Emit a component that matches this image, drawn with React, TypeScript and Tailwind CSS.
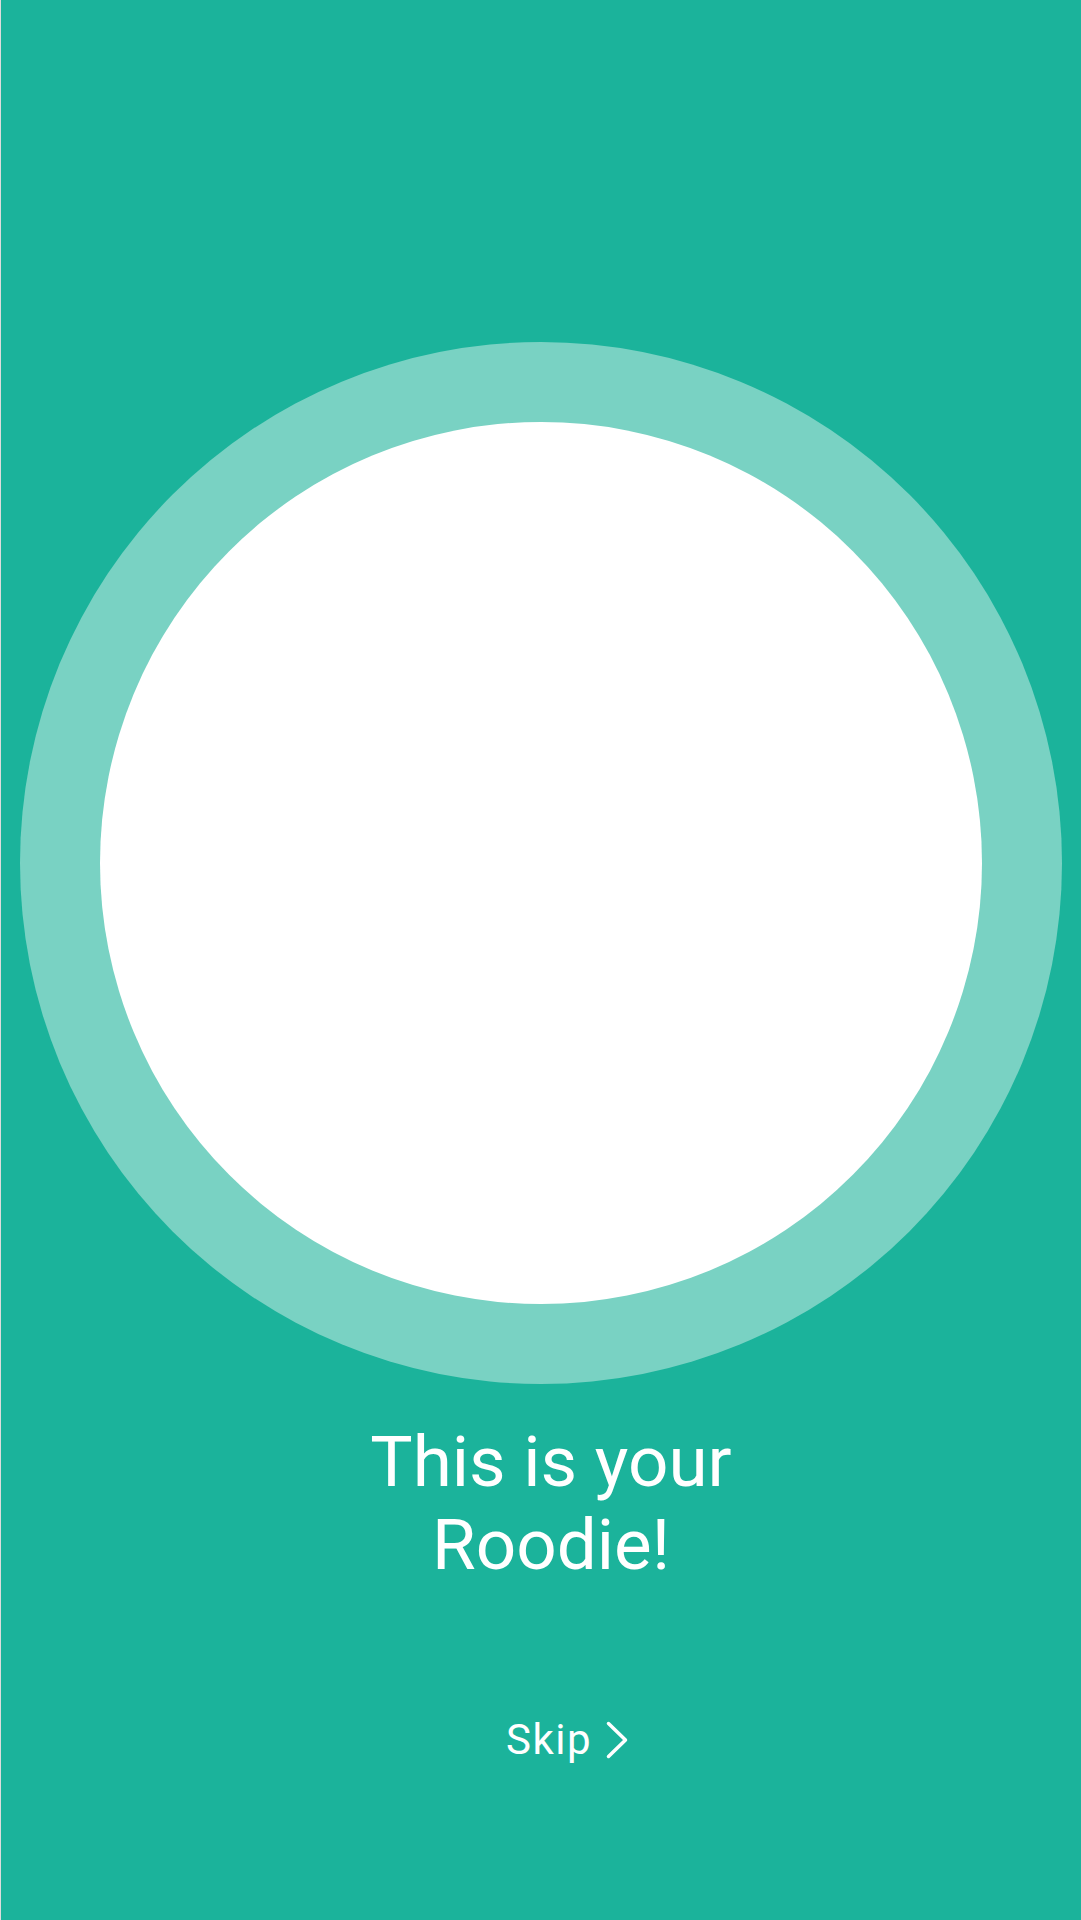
import React from "react";

const App: React.FC = () => {
  return (
    <div
      className="flex h-[1920px] w-full flex-col items-center border-l border-[#dcdcdc] bg-[#1bb39b] pt-[342px]"
      style={{ fontFamily: "Roboto, 'Liberation Sans', sans-serif" }}
    >
      <div className="h-[1042px] w-[1042px] shrink-0 rounded-full bg-[#79d2c3] p-[80px]">
        <div className="h-full w-full rounded-full bg-white" />
      </div>

      <h1 className="ml-[20px] mt-[36px] w-[440px] text-center text-[71px] font-normal leading-[83px] text-white">
        This is your Roodie!
      </h1>

      <button className="ml-[52px] mt-[130px] flex items-center gap-[14px] text-white">
        <span className="text-[42px] leading-[48px] tracking-[1.5px]">Skip</span>
        <svg
          width="22"
          height="38"
          viewBox="0 0 22 38"
          fill="none"
          stroke="currentColor"
          strokeWidth="3.5"
          strokeLinecap="round"
          strokeLinejoin="round"
        >
          <path d="M2.5 2.5 L19.5 19 L2.5 35.5" />
        </svg>
      </button>
    </div>
  );
};

export default App;
